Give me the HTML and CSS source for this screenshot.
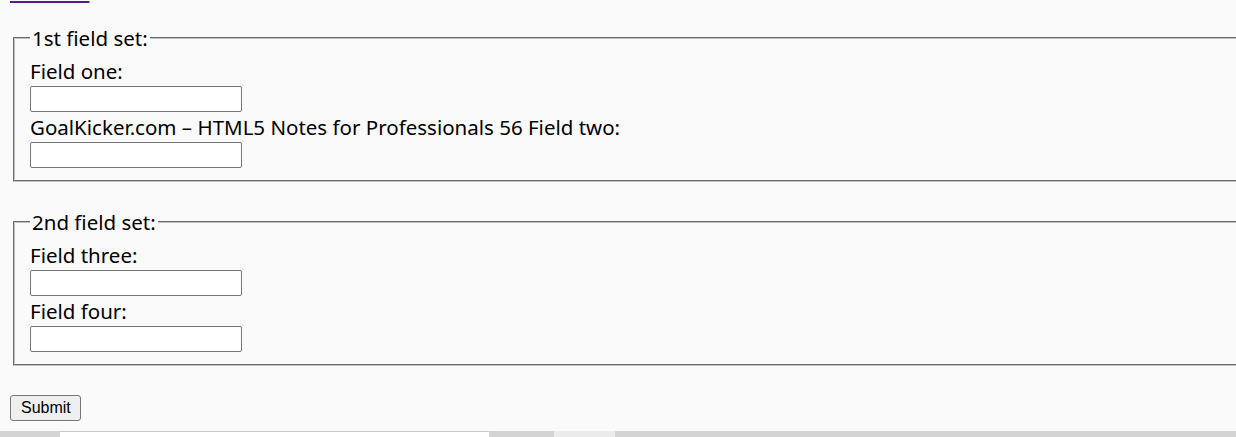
FILE: index.html
```html
<!DOCTYPE html>
<html lang="en">
<head>
<meta charset="utf-8">
<title>Fieldsets</title>
<link rel="stylesheet" href="styles.css">
</head>
<body>
<div class="page">
  <p class="toplink"><a href="#">Link to file 1</a></p>
  <form class="form">
    <fieldset class="set">
      <legend class="legend">1st field set:</legend>
      <label class="label">Field one:</label>
      <input class="field" type="text">
      <label class="label">GoalKicker.com – HTML5 Notes for Professionals 56 Field two:</label>
      <input class="field" type="text">
    </fieldset>
    <fieldset class="set set-second">
      <legend class="legend">2nd field set:</legend>
      <label class="label">Field three:</label>
      <input class="field" type="text">
      <label class="label">Field four:</label>
      <input class="field" type="text">
    </fieldset>
    <button class="submit" type="submit">Submit</button>
  </form>
</div>
<div class="strip">
  <span class="seg seg-a"></span>
  <span class="seg seg-b"></span>
  <span class="seg seg-c"></span>
  <span class="seg seg-d"></span>
  <span class="seg seg-e"></span>
</div>
</body>
</html>
```
FILE: styles.css
```css
html, body {
  margin: 0;
  padding: 0;
  background: #fafafa;
  overflow: hidden;
  height: 437px;
}
body {
  display: flex;
  flex-direction: column;
}
.page {
  padding: 0 0 0 10px;
  font-family: "Noto Sans", "Open Sans", sans-serif;
  font-size: 20.5px;
  color: #000;
  height: 431px;
  box-sizing: border-box;
}
.toplink {
  margin: -16px 0 0 0;
  height: 22px;
  line-height: 22px;
  font-size: 14px;
}
.toplink a {
  color: #551a8b;
  text-decoration-thickness: 2px;
}
.form {
  display: flex;
  flex-direction: column;
  align-items: flex-start;
  margin-top: 20px;
}
.set {
  width: 1300px;
  box-sizing: border-box;
  margin: 0 0 0 3px;
  padding: 6px 15px 12px 15px;
  border: 2px groove #c0c0c0;
  display: flex;
  flex-direction: column;
  align-items: flex-start;
  min-width: 0;
}
.set-second {
  margin-top: 28px;
}
.legend {
  padding: 0 2px;
  line-height: 24px;
  height: 24px;
}
.label {
  display: block;
  height: 30px;
  line-height: 30px;
  white-space: nowrap;
}
.field {
  width: 212px;
  height: 26px;
  box-sizing: border-box;
  margin: 0;
  border: 1px solid #767676;
  border-radius: 2px;
  background: #fff;
  padding: 1px 2px;
}
.submit {
  margin-top: 29px;
  height: 26px;
  padding: 0 9px 0 10px;
  font-family: "Liberation Sans", Arial, sans-serif;
  font-size: 16px;
  background: #efefef;
  color: #000;
  border: 1px solid #767676;
  border-radius: 3px;
}
.strip {
  display: flex;
  height: 6px;
}
.seg {
  display: block;
  height: 6px;
  background: #d4d4d4;
}
.seg-a { width: 60px; }
.seg-b { width: 429px; background: #fff; box-sizing: border-box; border-top: 1px solid #cccccc; }
.seg-c { width: 65px; }
.seg-d { width: 61px; background: #ebebeb; }
.seg-e { flex: 1; }
```
